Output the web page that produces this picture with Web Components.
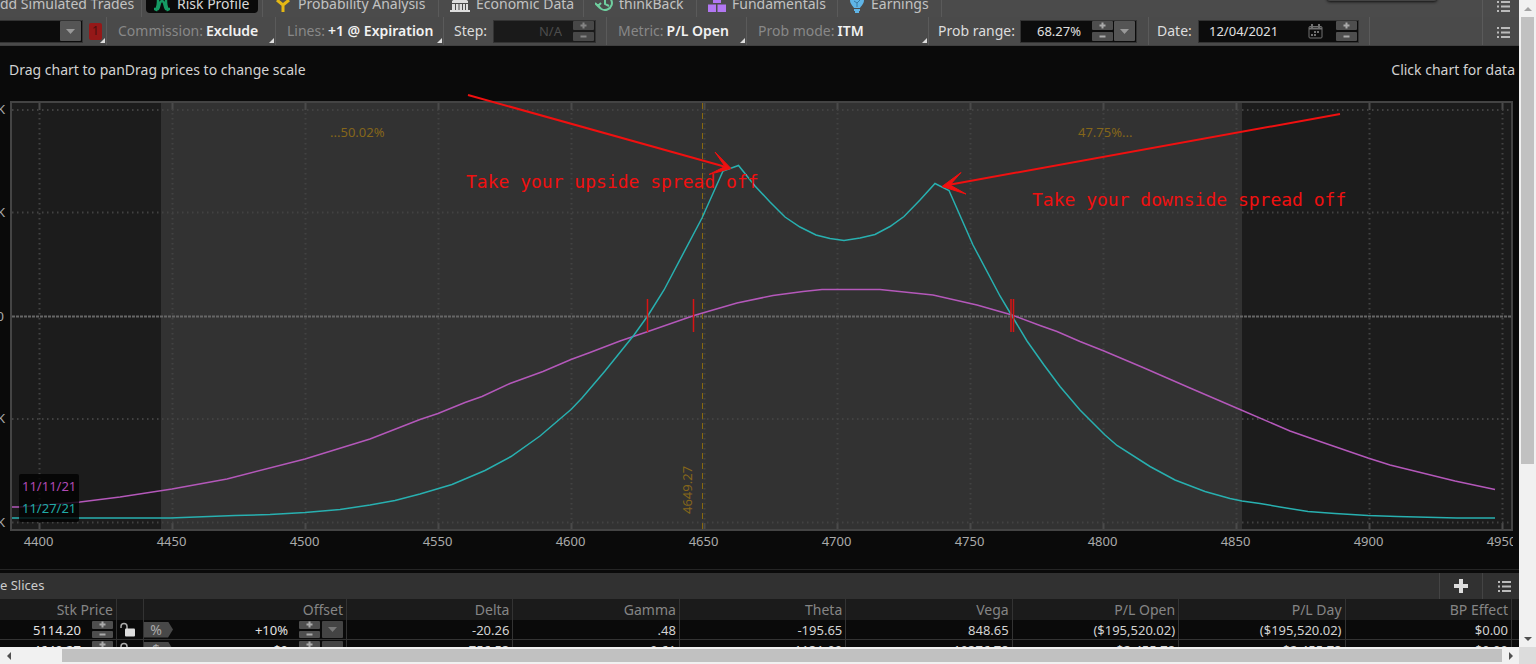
<!DOCTYPE html>
<html lang="en">
<head>
<meta charset="utf-8">
<title>Risk Profile</title>
<style>
html, body { margin: 0; height: 100%; }
body { background: #0a0a0a; color: #ccc; font: 13px/18px "Noto Sans", "Open Sans", sans-serif; overflow: hidden; }
</style>
</head>
<body>
<risk-app></risk-app>

<script>
const define = (name, html, setup) => {
  const tpl = document.createElement('template');
  tpl.innerHTML = html;
  customElements.define(name, class extends HTMLElement {
    connectedCallback() {
      if (this.shadowRoot) return;
      this.attachShadow({ mode: 'open' }).append(tpl.content.cloneNode(true));
      if (setup) setup(this, this.shadowRoot);
    }
  });
};

/* Up / down stepper */
define('step-buttons', `
<style>
:host { display: inline-flex; flex-direction: column; gap: 2px; width: 21px; height: 20px; flex: none; }
button { flex: 1; min-height: 0; padding: 0; border: 0; border-radius: 1px; background: #4e4e4e; color: #aaa; display: grid; place-items: center; }
:host([dim]) button { background: #484848; color: #858585; }
svg { display: block; }
</style>
<button aria-label="Increase"><svg width="7" height="7" viewBox="0 0 7 7"><path d="M3.5 .5v6M.5 3.5h6" stroke="currentColor" stroke-width="2"/></svg></button>
<button aria-label="Decrease"><svg width="7" height="7" viewBox="0 0 7 7"><path d="M.5 3.5h6" stroke="currentColor" stroke-width="2"/></svg></button>`);

define('drop-button', `
<style>
:host { display: inline-block; width: 21px; height: 20px; flex: none; }
button { display: grid; place-items: center; width: 100%; height: 100%; padding: 0; border: 0; border-radius: 1px; background: #555; color: #999; }
:host([dim]) button { background: #444; color: #777; }
</style>
<button aria-label="Open list"><svg width="9" height="5" viewBox="0 0 9 5"><path d="M0 0h9L4.500 5z" fill="currentColor"/></svg></button>`);

define('list-button', `
<style>
:host { display: inline-block; }
button { display: block; padding: 0; border: 0; background: none; color: #bbb; }
svg { display: block; }
</style>
<button aria-label="Menu"><svg width="13" height="13" viewBox="0 0 13 13"><path d="M4 2h9M4 6.500h9M4 11h9M0 2h2M0 6.500h2M0 11h2" stroke="currentColor" stroke-width="2"/></svg></button>`);

/* Tab in the upper bar */
define('app-tab', `
<style>
:host { display: flex; height: 26px; flex: none; box-sizing: border-box; padding: 0 4px 4px; border-right: 1px solid #5a5a5a; }
button { display: flex; align-items: center; gap: 6px; width: 100%; height: 22px; box-sizing: border-box; padding: 4px 7px 0; border: 0; border-radius: 4px; background: none; color: #c2c2c2; font: inherit; font-size: 14px; line-height: 18px; white-space: nowrap; }
:host([active]) button { background: #0a0a0a; color: #d8d8d8; }
:host([flush]) { padding: 0 4px 4px 0; }
:host([flush]) button { padding-left: 0; }
::slotted(svg) { flex: none; }
</style>
<button><slot name="icon"></slot><slot></slot></button>`);

/* Label + value with a corner menu mark */
define('menu-cell', `
<style>
:host { display: flex; position: relative; box-sizing: border-box; flex: none; align-items: center; border-right: 1px solid #5a5a5a; font-size: 14px; }
button { padding: 0 0 0 11px; border: 0; background: none; font: inherit; color: #888; white-space: nowrap; }
b { color: #f2f2f2; font-weight: 600; margin-left: 3px; }
i { position: absolute; right: 1px; bottom: 2px; width: 5px; height: 5px; background: #ddd; clip-path: polygon(100% 0, 100% 100%, 0 100%); }
</style>
<button><slot></slot><b></b></button><i></i>`, (host, root) => {
  root.querySelector('b').textContent = host.getAttribute('value');
});

define('tab-bar', `
<style>
:host { display: flex; align-items: flex-end; height: 17px; overflow: hidden; background: #4b4b4b; position: relative; }
.end { margin-left: auto; width: 37px; height: 26px; box-sizing: border-box; border-left: 1px solid #5a5a5a; padding: 8px 0 0 14px; }
.pop { position: absolute; right: 82px; top: -8px; width: 110px; height: 9px; background: #444; box-shadow: 0 1px 3px #111; border-radius: 3px; }
</style>
<app-tab flush style="width:142px">dd Simulated Trades</app-tab>
<app-tab active style="width:121px"><svg slot="icon" width="18" height="18" viewBox="0 0 18 18" fill="none" stroke="#159a63" stroke-width="2.500"><path d="M1 14h4c2-2 1-8 4-8s2 6 4 8h4M5 2v5c0 4-1 6-2 9M13 2v5c0 4 1 6 2 9"/></svg>Risk Profile</app-tab>
<app-tab style="width:176px"><svg slot="icon" width="18" height="18" viewBox="0 0 18 18" fill="none" stroke="#e3b714" stroke-width="3"><path d="M9 17v-7L3 5M9 10l6-5"/></svg>Probability Analysis</app-tab>
<app-tab style="width:145px"><svg slot="icon" width="20" height="18" viewBox="0 0 20 18" fill="#ddd"><path d="M10 0l8 6v2H2V6zM2 9h3v6H2zM6 9h2.500v6H6zM9.500 9H12v6H9.500zM13 9h2v6h-2zM16 9h2v6h-2zM0 15h20v2H0z"/></svg>Economic Data</app-tab>
<app-tab style="width:113px"><svg slot="icon" width="18" height="18" viewBox="0 0 18 18" fill="none" stroke="#6fcf9f" stroke-width="2"><path d="M3 9a7 7 0 1 0 2-6M10 4v5l4 2M0 8l3 3 3-3"/></svg>thinkBack</app-tab>
<app-tab style="width:141px"><svg slot="icon" width="18" height="18" viewBox="0 0 18 18" fill="#b277f2"><path d="M5 0h8v8H5zM0 9.500h8V17H0zM9.500 9.500H18V17H9.500z"/></svg>Fundamentals</app-tab>
<app-tab style="width:104px"><svg slot="icon" width="16" height="18" viewBox="0 0 16 18" fill="#5fb4e6"><path d="M1 5c0-7 14-7 14 0 0 4-3 6-4 8H5C4 11 1 9 1 5zM5 14h6v2H5zM6 16h4v2H6z"/><path d="M5 6l3 2 3-3M8 8v4" stroke="#397aa3" fill="none"/></svg>Earnings</app-tab>
<div class="end"><list-button></list-button></div>
<div class="pop"></div>`);

define('tool-bar', `
<style>
:host { display: flex; height: 29px; background: #4a4a4a; box-sizing: border-box; border-bottom: 1px solid #404040; }
.cell { display: flex; align-items: center; flex: none; box-sizing: border-box; border-right: 1px solid #5a5a5a; color: #ddd; position: relative; }
.field { display: flex; align-items: center; gap: 1px; height: 23px; box-sizing: border-box; padding: 1px; background: #0c0c0c; border: 1px solid #333; }
input { min-width: 0; border: 0; padding: 0; background: none; color: #e0e0e0; font: inherit; text-align: right; flex: 1; }
input.off { color: #4c4c4c; }
select { appearance: none; flex: 1; min-width: 0; border: 0; background: none; height: 18px; color: #ccc; }
.badge { width: 13px; height: 17px; margin-left: 6px; border: 0; padding: 0; border-radius: 2px; background: #951818; color: #4a1010; font: inherit; font-size: 12px; line-height: 16px; }
i { position: absolute; right: 1px; bottom: 2px; width: 5px; height: 5px; background: #ddd; clip-path: polygon(100% 0, 100% 100%, 0 100%); }
label { white-space: nowrap; font-size: 14px; }
.end { margin-left: auto; width: 37px; box-sizing: border-box; border-left: 1px solid #5a5a5a; padding: 8px 0 0 14px; }
</style>
<div class="cell" style="width:107px"><div class="field" style="width:83px;border-left:0"><select aria-label="Position"><option></option></select><drop-button></drop-button></div><button class="badge">1</button><i></i></div>
<menu-cell style="width:169px" value="Exclude">Commission:</menu-cell>
<menu-cell style="width:168px" value="+1 @ Expiration">Lines:</menu-cell>
<div class="cell" style="width:163px;padding-left:10px"><label for="step" style="width:39px">Step:</label><div class="field" style="width:103px;background:#1a1a1a"><input id="step" class="off" value="N/A" style="margin-right:10px"><step-buttons dim></step-buttons></div></div>
<menu-cell style="width:140px" value="P/L Open">Metric:</menu-cell>
<menu-cell style="width:182px" value="ITM">Prob mode:</menu-cell>
<div class="cell" style="width:220px;padding-left:9px"><label for="range" style="width:82px">Prob range:</label><div class="field" style="width:117px"><input id="range" value="68.27%" style="margin-right:10px"><step-buttons></step-buttons><drop-button></drop-button></div></div>
<div class="cell" style="width:221px;padding-left:8px"><label for="date" style="width:41px">Date:</label><div class="field" style="width:161px"><input id="date" value="12/04/2021" style="text-align:left;padding-left:9px"><svg width="15" height="15" viewBox="0 0 15 15" fill="none" stroke="#707070" style="margin-right:12px"><rect x="1" y="2.500" width="13" height="11.500" rx="1"/><path d="M1 4.500h13M4 0v4M11 0v4" stroke-width="2"/><path d="M6 8h6M3 11h6" stroke-width="2" stroke-dasharray="2 1"/></svg><step-buttons></step-buttons></div></div>
<div class="end"><list-button></list-button></div>`);

/* Risk curve plot */
define('risk-chart', `
<style>
:host { display: block; background: #0a0a0a; }
.hints { display: flex; justify-content: space-between; height: 46px; box-sizing: border-box; padding: 15px 4px 0 9px; color: #d2d2d2; font-size: 14px; }
svg { display: block; width: 100%; height: auto; font-family: "Noto Sans", "Open Sans", sans-serif; font-size: 13px; }
.axis { fill: #aaa; text-anchor: middle; }
.prob { fill: #85661a; }
.note { font: 18px "DejaVu Sans Mono", monospace; fill: #f01010; }
</style>
<div class="hints"><span>Drag chart to panDrag prices to change scale</span><span>Click chart for data</span></div>
<svg viewBox="0 92 1519 477" role="img" aria-label="Profit and loss by underlying price">
  <defs><clipPath id="axisclip"><rect x="0" y="532" width="1513" height="30"/></clipPath></defs>
  <rect x="10" y="101" width="1503" height="430" fill="#1c1c1c"/>
  <rect x="161" y="101" width="1081" height="430" fill="#323232"/>
  <g id="grid" fill="none"></g>
  <rect x="11" y="102" width="1501" height="428" fill="none" stroke="#444" stroke-width="2"/>
  <path d="M12 316.500H1511" stroke="#666" stroke-width="2" stroke-dasharray="3 1"/>
  <path d="M702.500 103V529" stroke="#88680f" stroke-dasharray="6 4" stroke-width="1"/>
  <text class="prob" x="330" y="137">...50.02%</text>
  <text class="prob" x="1078" y="137">47.75%...</text>
  <text class="prob" transform="translate(692 514) rotate(-90)">4649.27</text>
  <g fill="none" stroke-width="1.500">
    <path stroke="#b458ba" d="M12 507H20L80 502 120 497 172 489 227 479 305 459 370 439 420 419.500 438 413.500 465 402.500 482 396.500 510 383.500 543 371.500 571 359.500 590 352.500 620 341 648 331.500 694 315.500 737 303 773 295.500 803 291.500 822 289.500H880L933 295 977 305 1012 315 1040 325.500 1057 331.500 1080 341.500 1104 351 1143 367.500 1190 388 1240 409.500 1290 431 1320 441.500 1368 458 1390 465 1455 481 1495 489.500"/>
    <path stroke="#28b0b0" d="M12 518H170L235 515.500 270 514.500 305 512.500 340 509.500 370 505 395 500.500 420 494 452 484.500 485 470.500 511 456.500 540 436 571 409.500 582 398 605 371 634 335 648 315.500 664 290 702 218 723 171 738.500 165.500 755 186 770 202 785 217 800 227 816 235 830 238.500 844 240.500 860 238 875 234.500 890 226.500 904 216.500 920 200 935 183.500 949 190.500 973 245 1000 296 1012 316 1027 341 1044 365 1060 386.500 1080 410 1105 435 1117 445.500 1150 466.500 1175 480 1205 491.500 1230 498.500 1242 501 1260 503.500 1280 507 1308 511.500 1335 513.500 1368 515.500 1397 516.500 1457 518H1495"/>
  </g>
  <path d="M647.500 299V332M693.500 299V332M1011 299V332M1013.500 299V332" stroke="#d81414" stroke-width="1.500"/>
  <rect x="19" y="474" width="60" height="48" rx="2" fill="#000" fill-opacity=".78"/>
  <text x="22" y="491" fill="#b04ab4">11/11/21</text>
  <text x="22" y="513" fill="#20aaa6">11/27/21</text>
  <g id="labels" class="axis" clip-path="url(#axisclip)"></g>
  <g class="axis" style="text-anchor:end"><text x="5" y="114">K</text><text x="5" y="217">K</text><text x="4" y="321">0</text><text x="5" y="423">K</text><text x="5" y="527">K</text></g>
  <g stroke="#f01010" fill="#f01010" stroke-width="2">
    <path d="M468 95L726 167M1340 114L948 185" fill="none"/>
    <path d="M731 168.500L709 174.500 725 166.500 715 152zM942 186.500L961 172.500 950 185 966 194z" stroke-width="1"/>
  </g>
  <text class="note" x="466" y="188">Take your upside spread off</text>
  <text class="note" x="1032" y="206">Take your downside spread off</text>
</svg>`, (host, root) => {
  let grid = '', labels = '';
  for (let k = 0; k < 12; k++) {
    const x = 39.5 + k * 133;
    grid += `<path d="M${x} 113V522" stroke="#424242" stroke-width="2" stroke-dasharray="1.500 3.500"/><path d="M${x} 103v7M${x} 523v6" stroke="#4a4a4a" stroke-width="2"/>`;
    labels += `<text x="${x - 1}" y="546">${4400 + k * 50}</text>`;
  }
  for (const y of [110, 212.5, 419, 522.5])
    grid += `<path d="M12 ${y}H1511" stroke="#424242" stroke-width="2" stroke-dasharray="1.500 3.500"/>`;
  root.getElementById('grid').innerHTML = grid;
  root.getElementById('labels').innerHTML = labels;
});

/* Price slices table */
define('price-slices', `
<style>
:host { display: block; border-top: 1px solid #252525; }
header { display: flex; align-items: center; height: 26px; margin-top: 3px; background: #313131; color: #ccc; }
h2 { margin: 0 auto 0 0; font: inherit; line-height: 24px; height: 26px; }
.act { display: grid; place-items: center; box-sizing: border-box; height: 26px; width: 43px; border-left: 1px solid #444; }
.act.last { width: 37px; padding-left: 6px; }
.add { border: 0; padding: 0; background: none; height: 14px; color: #ddd; }
svg { display: block; }
table { width: 100%; table-layout: fixed; border-collapse: separate; border-spacing: 0; }
th, td { box-sizing: border-box; padding: 0 3px 0 0; text-align: right; white-space: nowrap; border-right: 1px solid #333; }
th { height: 21px; font-size: 14px; line-height: 18px; font-weight: 400; color: #858585; background: #1b1b1b; }
td { height: 20px; color: #d2d2d2; border-bottom: 1px solid #333; line-height: 18px; }
th:last-child, td:last-child { border-right: 0; }
.line { display: flex; align-items: center; justify-content: flex-end; gap: 2px; height: 19px; }
input { flex: 1; min-width: 0; width: 0; border: 0; padding: 0; margin-right: 9px; background: none; color: #e2e2e2; font: inherit; height: 18px; text-align: right; }
.tag { width: 29px; height: 16px; padding: 0 5px 0 0; border: 0; background: #484848; color: #aaa; font: inherit; font-size: 14px; line-height: 16px; clip-path: polygon(0 0, 83% 0, 100% 50%, 83% 100%, 0 100%); }
.lock { display: block; border: 0; background: none; padding: 0 0 0 2px; }
step-buttons, drop-button { height: 17px; }
</style>
<header><h2>e Slices</h2><div class="act"><button class="add" aria-label="Add slice"><svg width="14" height="14" viewBox="0 0 14 14"><path d="M7 0v14M0 7h14" stroke="currentColor" stroke-width="4"/></svg></button></div><div class="act last"><list-button></list-button></div></header>
<table>
<colgroup><col style="width:117px"><col style="width:27px"><col style="width:203px"><col><col><col><col><col><col><col><col style="width:7px"></colgroup>
<thead><tr><th>Stk Price</th><th></th><th>Offset</th><th>Delta</th><th>Gamma</th><th>Theta</th><th>Vega</th><th>P/L Open</th><th>P/L Day</th><th>BP Effect</th><th></th></tr></thead>
<tbody></tbody>
</table>`, (host, root) => {
  const rows = [
    ['5114.20', '%', '+10%', '-20.26', '.48', '-195.65', '848.65', '($195,520.02)', '($195,520.02)', '$0.00'],
    ['4649.27', '$', '$0', '756.53', '9.61', '1131.09', '19376.78', '$2,455.78', '$2,455.78', '$0.00']
  ];
  root.querySelector('tbody').innerHTML = rows.map(([price, unit, offset, ...rest]) => `<tr>
    <td><div class="line"><input aria-label="Stock price" value="${price}"><step-buttons></step-buttons></div></td>
    <td><button class="lock" aria-label="Unlock"><svg width="17" height="16" viewBox="0 0 17 16"><path d="M2 6V4.500a3 3 0 0 1 6 0V7" fill="none" stroke="#aaa" stroke-width="1.500"/><rect x="6" y="6.500" width="10" height="8" rx="1" fill="#ddd"/></svg></button></td>
    <td><div class="line"><button class="tag">${unit}</button><input aria-label="Offset" value="${offset}"><step-buttons></step-buttons><drop-button dim></drop-button></div></td>
    ${rest.map(v => `<td>${v}</td>`).join('')}<td></td></tr>`).join('');
});

/* Scroll bars of the surrounding window */
define('scroll-rail', `
<style>
:host { display: flex; background: #f1f1f1; box-sizing: border-box; min-width: 0; min-height: 0; }
:host([vertical]) { flex-direction: column; }
button { flex: none; width: 17px; height: 17px; padding: 0; border: 0; background: none; display: grid; place-items: center; color: #505050; }
:host([vertical]) button:first-of-type { color: #a3a3a3; }
.track { flex: 1; display: flex; min-width: 0; min-height: 0; padding: 2px 0; }
:host([vertical]) .track { flex-direction: column; padding: 0 2px; }
.thumb { background: #c1c1c1; flex: 0 0 73%; }
:host(:not([vertical])) .thumb { flex: 1; margin-left: 45px; }
:host(:not([vertical])) svg { transform: rotate(-90deg); }
</style>
<button aria-label="Scroll back"><svg width="8" height="4" viewBox="0 0 8 4"><path d="M0 4h8L4 0z" fill="currentColor"/></svg></button>
<div class="track"><div class="thumb"></div></div>
<button aria-label="Scroll forward"><svg width="8" height="4" viewBox="0 0 8 4"><path d="M0 0h8L4 4z" fill="currentColor"/></svg></button>`);

define('risk-app', `
<style>
:host { display: grid; grid-template: minmax(0, 1fr) 17px / minmax(0, 1fr) 17px; height: 100vh; background: #dcdcdc; }
main { overflow: hidden; background: #0a0a0a; }
</style>
<main><tab-bar></tab-bar><tool-bar></tool-bar><risk-chart></risk-chart><price-slices></price-slices></main>
<scroll-rail vertical></scroll-rail>
<scroll-rail></scroll-rail>`);
</script>
</body>
</html>
